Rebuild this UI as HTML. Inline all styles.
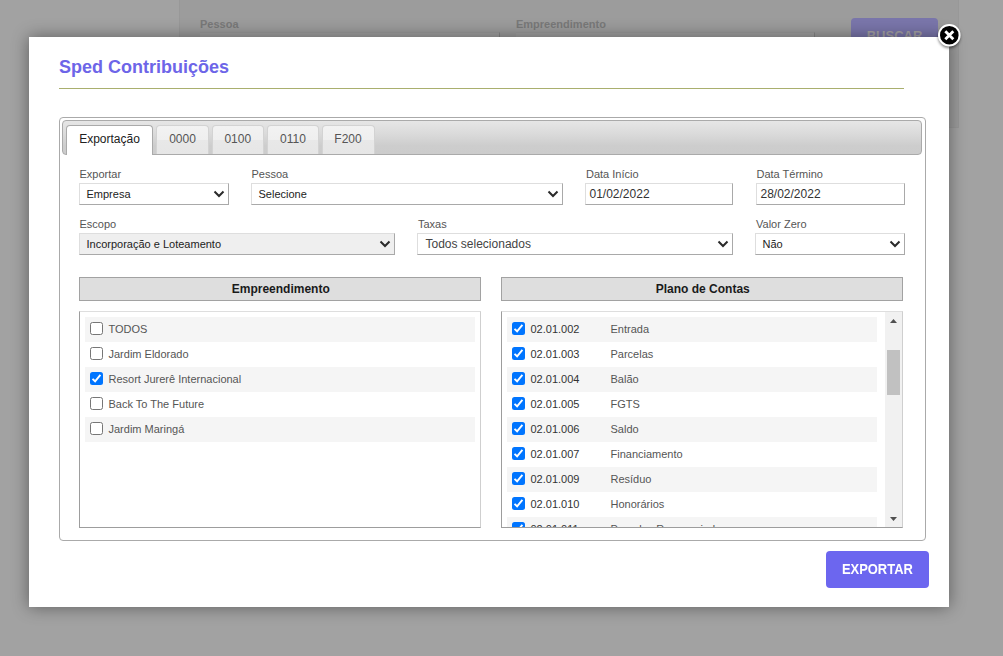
<!DOCTYPE html>
<html>
<head>
<meta charset="utf-8">
<title>Sped Contribuições</title>
<style>
*{box-sizing:border-box;}
html,body{margin:0;padding:0;}
body{width:1003px;height:656px;overflow:hidden;background:#a2a2a2;font-family:"Liberation Sans",sans-serif;position:relative;}
.abs{position:absolute;}
/* background page (dimmed) */
#bgpanel{left:179px;top:0;width:780px;height:128px;border-bottom:1px solid #989898;background:#9c9c9c;border-left:1px solid #989898;border-right:1px solid #989898;}
.bglabel{font-size:11px;font-weight:bold;color:#797979;line-height:13px;white-space:nowrap;}
#bgbtn{left:851px;top:18px;width:87px;height:40px;background:#7a76ab;border-radius:4px;color:#a4a1a3;font-weight:bold;font-size:13px;line-height:36px;text-align:center;}
/* modal */
#modal{left:29px;top:37px;width:920px;height:570px;background:#fff;box-shadow:0 0 16px rgba(0,0,0,0.43);}
#title{left:59px;top:57px;font-size:18px;font-weight:bold;color:#6d65e8;line-height:21px;white-space:nowrap;}
#hr{left:59px;top:88px;width:845px;height:1px;background:#a9af6e;}
/* tabs */
#tabs{left:59px;top:117px;width:867px;height:424px;border:1px solid #aaa;border-radius:4px;background:#fff;}
#nav{left:62px;top:120px;width:860px;height:35px;border:1px solid #aaa;border-radius:4px;background:linear-gradient(#e6e6e6 0%,#dadada 40%,#cdcdcd 75%,#cccccc 100%);}
.tab{top:125px;height:29px;border:1px solid #d3d3d3;border-bottom:0;border-radius:4px 4px 0 0;background:linear-gradient(#f2f2f2 0%,#efefef 49%,#e8e8e8 51%,#e6e6e6 100%);font-size:12px;color:#555;text-align:center;line-height:27px;white-space:nowrap;}
.tab.on{height:30px;border-color:#aaa;background:#fff;color:#212121;}
/* form */
.lbl{font-size:11px;color:#555;line-height:13px;white-space:nowrap;}
.inp{height:22px;border:1px solid;border-color:#dedede #a9a9a9 #a9a9a9 #dedede;background:#fff;font-size:12px;color:#333;line-height:20px;padding-left:3.5px;white-space:nowrap;}
.sel{height:22px;border:1px solid;border-color:#dedede #a9a9a9 #a9a9a9 #dedede;background:#fff;font-size:11px;color:#222;line-height:20px;padding-left:6.5px;white-space:nowrap;}
.sel svg{position:absolute;right:3px;top:6px;}
.sel.gray{background:#efefef;}
.sel.big{font-size:12px;color:#444;padding-left:7.5px;}
/* lists */
.lhead{top:277px;height:24px;border:1px solid #a2a2a2;background:#dedede;font-size:12px;font-weight:bold;color:#1a1a1a;text-align:center;line-height:22px;padding-left:1.5px;}
.lbox{top:311px;height:217px;border:1px solid;border-color:#dedede #cfcfcf #9d9d9d #9d9d9d;background:#fff;overflow:hidden;}
.row{position:absolute;left:5px;height:25px;font-size:11px;color:#555;line-height:25px;white-space:nowrap;}
.row.g{background:#f5f5f5;}
.cb{position:absolute;left:5px;top:5px;width:13px;height:13px;border:1px solid #767676;border-radius:2.5px;background:#fff;}
.cb.on{border:0;background:#0075ff;}
.cb.on svg{position:absolute;left:0;top:0;}
.row .t{position:absolute;left:23.5px;top:0;}
.row .c{position:absolute;left:23.5px;top:0;color:#333;}
.row .n{position:absolute;left:103.5px;top:0;}
/* button */
#exp{left:826px;top:551px;width:103px;height:37px;border-radius:4px;background:#6c66ef;color:#fff;font-size:14px;font-weight:bold;text-align:center;line-height:36px;}
#exp span{display:inline-block;transform:scaleX(0.925);transform-origin:50% 50%;}
</style>
</head>
<body>

<!-- dimmed background page -->
<div id="bgpanel" class="abs"></div>
<div class="abs bglabel" style="left:200px;top:18px;">Pessoa</div>
<div class="abs bglabel" style="left:516px;top:18px;">Empreendimento</div>
<div class="abs" style="left:200px;top:32px;width:300px;height:10px;background:#a1a1a1;border-top:1px solid #999;border-right:1px solid #868686;"></div>
<div class="abs" style="left:516px;top:32px;width:299px;height:10px;background:#a1a1a1;border-top:1px solid #999;border-right:1px solid #868686;"></div>
<div id="bgbtn" class="abs">BUSCAR</div>

<!-- modal -->
<div id="modal" class="abs"></div>
<div id="title" class="abs">Sped Contribuições</div>
<div id="hr" class="abs"></div>

<div id="tabs" class="abs"></div>
<div id="nav" class="abs"></div>
<div class="abs tab on" style="left:66px;width:87px;">Exportação</div>
<div class="abs tab" style="left:156px;width:53px;">0000</div>
<div class="abs tab" style="left:211.5px;width:52.5px;">0100</div>
<div class="abs tab" style="left:267px;width:52px;">0110</div>
<div class="abs tab" style="left:321.5px;width:53px;">F200</div>

<!-- form row 1 -->
<div class="abs lbl" style="left:79.5px;top:168px;">Exportar</div>
<div class="abs lbl" style="left:251.5px;top:168px;">Pessoa</div>
<div class="abs lbl" style="left:586px;top:168px;">Data Início</div>
<div class="abs lbl" style="left:756.5px;top:168px;">Data Término</div>

<div class="abs sel" style="left:79px;top:183px;width:150px;">Empresa<svg width="12" height="8" viewBox="0 0 12 8"><path d="M1.5 1.5 L6 6 L10.5 1.5" fill="none" stroke="#2a2a2a" stroke-width="2"/></svg></div>
<div class="abs sel" style="left:251px;top:183px;width:312px;">Selecione<svg width="12" height="8" viewBox="0 0 12 8"><path d="M1.5 1.5 L6 6 L10.5 1.5" fill="none" stroke="#2a2a2a" stroke-width="2"/></svg></div>
<div class="abs inp" style="left:585px;top:183px;width:148px;">01/02/2022</div>
<div class="abs inp" style="left:756px;top:183px;width:149px;">28/02/2022</div>

<!-- form row 2 -->
<div class="abs lbl" style="left:79.5px;top:218px;">Escopo</div>
<div class="abs lbl" style="left:418px;top:218px;">Taxas</div>
<div class="abs lbl" style="left:756px;top:218px;">Valor Zero</div>

<div class="abs sel gray" style="left:79px;top:233px;width:316px;">Incorporação e Loteamento<svg width="12" height="8" viewBox="0 0 12 8"><path d="M1.5 1.5 L6 6 L10.5 1.5" fill="none" stroke="#2a2a2a" stroke-width="2"/></svg></div>
<div class="abs sel big" style="left:417px;top:233px;width:316px;">Todos selecionados<svg width="12" height="8" viewBox="0 0 12 8"><path d="M1.5 1.5 L6 6 L10.5 1.5" fill="none" stroke="#2a2a2a" stroke-width="2"/></svg></div>
<div class="abs sel" style="left:755px;top:233px;width:150px;">Não<svg width="12" height="8" viewBox="0 0 12 8"><path d="M1.5 1.5 L6 6 L10.5 1.5" fill="none" stroke="#2a2a2a" stroke-width="2"/></svg></div>

<!-- lists -->
<div class="abs lhead" style="left:79px;width:402px;">Empreendimento</div>
<div class="abs lhead" style="left:501px;width:402px;">Plano de Contas</div>

<div class="abs lbox" style="left:79px;width:402px;">
  <div class="row g" style="top:5px;width:390px;"><div class="cb"></div><span class="t">TODOS</span></div>
  <div class="row" style="top:30px;width:390px;"><div class="cb"></div><span class="t">Jardim Eldorado</span></div>
  <div class="row g" style="top:55px;width:390px;"><div class="cb on"><svg width="13" height="13" viewBox="0 0 13 13"><path d="M2.5 6.9 L5.1 9.3 L10.4 2.8" fill="none" stroke="#fff" stroke-width="1.9"/></svg></div><span class="t">Resort Jurerê Internacional</span></div>
  <div class="row" style="top:80px;width:390px;"><div class="cb"></div><span class="t">Back To The Future</span></div>
  <div class="row g" style="top:105px;width:390px;"><div class="cb"></div><span class="t">Jardim Maringá</span></div>
</div>

<div class="abs lbox" id="rbox" style="left:501px;width:402px;">
  <div class="row g" style="top:5px;width:370px;"><div class="cb on"><svg width="13" height="13" viewBox="0 0 13 13"><path d="M2.5 6.9 L5.1 9.3 L10.4 2.8" fill="none" stroke="#fff" stroke-width="1.9"/></svg></div><span class="c">02.01.002</span><span class="n">Entrada</span></div>
  <div class="row" style="top:30px;width:370px;"><div class="cb on"><svg width="13" height="13" viewBox="0 0 13 13"><path d="M2.5 6.9 L5.1 9.3 L10.4 2.8" fill="none" stroke="#fff" stroke-width="1.9"/></svg></div><span class="c">02.01.003</span><span class="n">Parcelas</span></div>
  <div class="row g" style="top:55px;width:370px;"><div class="cb on"><svg width="13" height="13" viewBox="0 0 13 13"><path d="M2.5 6.9 L5.1 9.3 L10.4 2.8" fill="none" stroke="#fff" stroke-width="1.9"/></svg></div><span class="c">02.01.004</span><span class="n">Balão</span></div>
  <div class="row" style="top:80px;width:370px;"><div class="cb on"><svg width="13" height="13" viewBox="0 0 13 13"><path d="M2.5 6.9 L5.1 9.3 L10.4 2.8" fill="none" stroke="#fff" stroke-width="1.9"/></svg></div><span class="c">02.01.005</span><span class="n">FGTS</span></div>
  <div class="row g" style="top:105px;width:370px;"><div class="cb on"><svg width="13" height="13" viewBox="0 0 13 13"><path d="M2.5 6.9 L5.1 9.3 L10.4 2.8" fill="none" stroke="#fff" stroke-width="1.9"/></svg></div><span class="c">02.01.006</span><span class="n">Saldo</span></div>
  <div class="row" style="top:130px;width:370px;"><div class="cb on"><svg width="13" height="13" viewBox="0 0 13 13"><path d="M2.5 6.9 L5.1 9.3 L10.4 2.8" fill="none" stroke="#fff" stroke-width="1.9"/></svg></div><span class="c">02.01.007</span><span class="n">Financiamento</span></div>
  <div class="row g" style="top:155px;width:370px;"><div class="cb on"><svg width="13" height="13" viewBox="0 0 13 13"><path d="M2.5 6.9 L5.1 9.3 L10.4 2.8" fill="none" stroke="#fff" stroke-width="1.9"/></svg></div><span class="c">02.01.009</span><span class="n">Resíduo</span></div>
  <div class="row" style="top:180px;width:370px;"><div class="cb on"><svg width="13" height="13" viewBox="0 0 13 13"><path d="M2.5 6.9 L5.1 9.3 L10.4 2.8" fill="none" stroke="#fff" stroke-width="1.9"/></svg></div><span class="c">02.01.010</span><span class="n">Honorários</span></div>
  <div class="row g" style="top:205px;width:370px;"><div class="cb on"><svg width="13" height="13" viewBox="0 0 13 13"><path d="M2.5 6.9 L5.1 9.3 L10.4 2.8" fill="none" stroke="#fff" stroke-width="1.9"/></svg></div><span class="c">02.01.011</span><span class="n">Parcelas Renegociadas</span></div>
  <!-- scrollbar -->
  <div class="abs" style="left:383px;top:0;width:17px;height:215px;background:#f1f1f1;"></div>
  <div class="abs" style="left:385px;top:38px;width:13px;height:45px;background:#c1c1c1;"></div>
  <svg class="abs" style="left:383px;top:0;" width="17" height="17" viewBox="0 0 17 17"><path d="M5 11 L8.5 7 L12 11 Z" fill="#505050"/></svg>
  <svg class="abs" style="left:383px;top:198px;" width="17" height="17" viewBox="0 0 17 17"><path d="M5 7 L8.5 11 L12 7 Z" fill="#505050"/></svg>
</div>

<div id="exp" class="abs"><span>EXPORTAR</span></div>

<!-- close button -->
<svg class="abs" style="left:931px;top:19px;" width="36" height="36" viewBox="0 0 36 36">
  <defs><filter id="sh" x="-30%" y="-30%" width="160%" height="170%"><feGaussianBlur stdDeviation="1.6"/></filter></defs>
  <circle cx="18.3" cy="18" r="11" fill="#000" opacity="0.55" filter="url(#sh)"/>
  <circle cx="18.3" cy="16.2" r="10.3" fill="#000" stroke="#fff" stroke-width="2"/>
  <path d="M14.3 12.2 L22.3 20.2 M22.3 12.2 L14.3 20.2" stroke="#fff" stroke-width="2.8" fill="none"/>
</svg>

</body>
</html>
